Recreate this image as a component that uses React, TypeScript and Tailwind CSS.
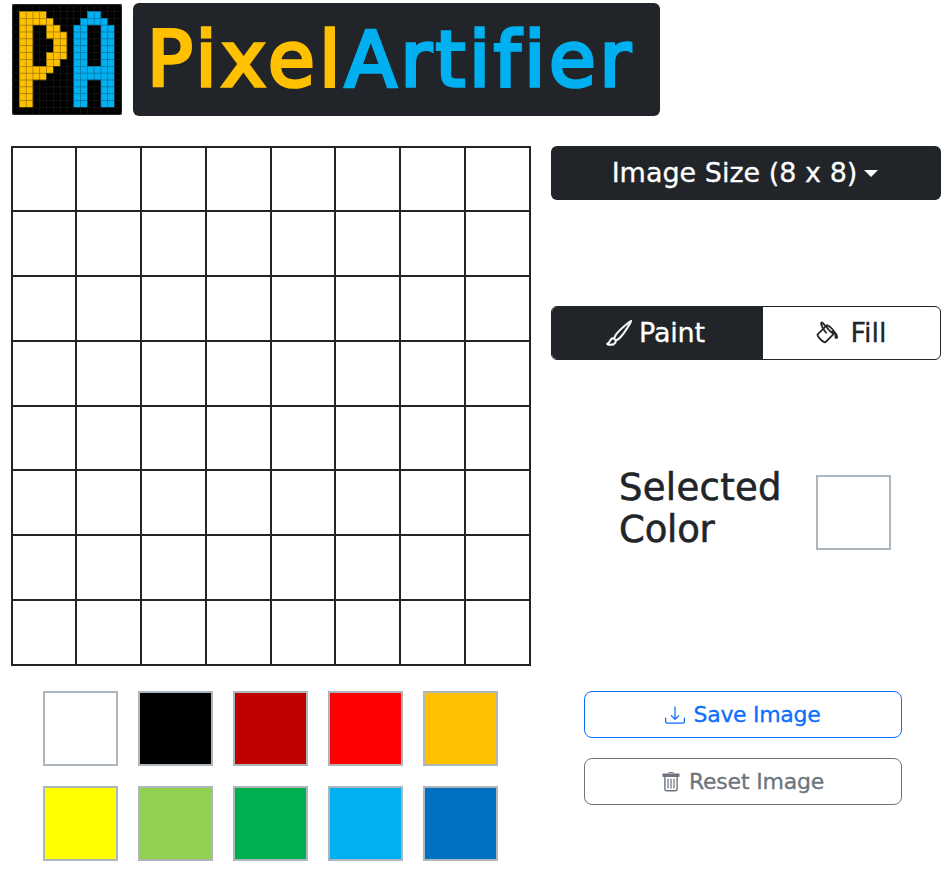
import React from "react";
import { BsBrush, BsPaintBucket, BsDownload } from "react-icons/bs";

const LOGO = [
  "................",
  ".PPPP......AA...",
  ".PPPPP....AAAA..",
  ".PP..PP..AA..AA.",
  ".PP..PPP.AA..AA.",
  ".PP...PP.AA..AA.",
  ".PP...PP.AA..AA.",
  ".PP..PPP.AA..AA.",
  ".PP..PP..AA..AA.",
  ".PPPPP...AAAAAA.",
  ".PPPP....AAAAAA.",
  ".PP......AA..AA.",
  ".PP......AA..AA.",
  ".PP......AA..AA.",
  ".PP......AA..AA.",
  "................",
];

const PALETTE = [
  "bg-white",
  "bg-black",
  "bg-[#c00000]",
  "bg-[#ff0000]",
  "bg-[#ffc000]",
  "bg-[#ffff00]",
  "bg-[#92d050]",
  "bg-[#00b050]",
  "bg-[#00b0f0]",
  "bg-[#0070c0]",
];

function Logo() {
  const s = 6.8;
  return (
    <svg width="110" height="111" viewBox="0 0 110 111" className="mt-px shrink-0">
      <rect x="0.5" y="0.5" width="109" height="110" rx="2" fill="#000" stroke="#4a4646" />
      {LOGO.map((row, y) =>
        row.split("").map((c, x) => (
          <rect
            key={`${x}-${y}`}
            x={0.6 + x * s}
            y={0.6 + y * 6.86}
            width={s}
            height={6.86}
            fill={c === "P" ? "#ffc000" : c === "A" ? "#00b0f0" : "none"}
            stroke={c === "P" ? "#a8800a" : c === "A" ? "#0a7cae" : "#141414"}
            strokeWidth="0.6"
          />
        )),
      )}
    </svg>
  );
}

function TrashIcon() {
  return (
    <svg width="18" height="20" viewBox="0 0 18 20" fill="none" stroke="currentColor">
      <path d="M6.5 1.6V1.2a.7.7 0 0 1 .7-.7h3.6a.7.7 0 0 1 .7.7v.4" />
      <rect x="0.5" y="1.4" width="17" height="3.6" rx="0.8" fill="currentColor" stroke="none" />
      <path d="M2.9 4.5v12.2a2 2 0 0 0 2 2h8.2a2 2 0 0 0 2-2V4.5" strokeWidth="1.4" />
      <path d="M6 7v9M9 7v9M12 7v9" strokeWidth="1.2" strokeLinecap="round" />
    </svg>
  );
}

function Canvas() {
  return (
    <div className="grid h-[520px] w-[520px] grid-cols-[64px_65px_65px_65px_64px_65px_65px_65px] grid-rows-[64px_65px_65px_65px_64px_65px_65px_65px] border-r-2 border-b-2 border-[#212529]">
      {Array.from({ length: 64 }, (_, i) => (
        <div key={i} className="border-t-2 border-l-2 border-[#212529] bg-white" />
      ))}
    </div>
  );
}

export default function App() {
  return (
    <div className="h-[871px] w-[944px] overflow-hidden bg-white pt-[3px] pl-[11px] font-['DejaVu_Sans',sans-serif] text-[#212529]">
      <header className="flex h-[113px] gap-[11px] pl-px">
        <Logo />
        <h1 className="flex h-[113px] w-[527px] items-center rounded-md bg-[#212529] pt-px pl-[14px] text-[76px] leading-[112px] whitespace-nowrap [-webkit-text-stroke:3.5px_currentColor]">
          <span className="tracking-[4.4px] text-[#ffc000]">Pixel</span>
          <span className="tracking-[3.7px] text-[#00b0f0]">Artifier</span>
        </h1>
      </header>

      <main className="mt-[30px] flex gap-5">
        <section className="w-[520px]">
          <Canvas />
          <div className="mt-[25px] ml-8 grid w-[455px] grid-cols-5 gap-5">
            {PALETTE.map((color) => (
              <button key={color} className={`h-[75px] w-[75px] border-2 border-[#adb5bd] ${color}`} />
            ))}
          </div>
        </section>

        <section className="w-[390px] text-[27px] [-webkit-text-stroke:0.3px_currentColor]">
          <button className="flex h-[54px] w-full items-center justify-center rounded-md bg-[#212529] pr-0.5 text-white">
            <span>Image Size (8 x 8)</span>
            <span className="ml-[7px] border-x-[7px] border-t-[7px] border-x-transparent border-t-white" />
          </button>

          <div className="mt-[106px] flex h-[54px] overflow-hidden rounded-md border border-[#212529] bg-white">
            <button className="flex w-[211px] items-center justify-center gap-[7px] bg-[#212529] pr-1 text-white">
              <BsBrush size={26} strokeWidth={0.3} />
              <span className="tracking-[-0.2px]">Paint</span>
            </button>
            <button className="flex flex-1 items-center justify-center gap-[9px]">
              <BsPaintBucket size={25} strokeWidth={0.2} />
              <span>Fill</span>
            </button>
          </div>

          <div className="mt-[104px] ml-[68px] flex items-center">
            <div className="w-[197px] pt-[3px] text-[37px] leading-[42px] [-webkit-text-stroke:0.6px_currentColor]">
              <span className="tracking-[0.3px]">Selected</span>
              <br />
              <span className="tracking-[-0.2px]">Color</span>
            </div>
            <div className="mt-[9px] h-[75px] w-[75px] border-2 border-[#adb5bd] bg-white" />
          </div>

          <div className="mt-[140px] ml-[33px] flex w-[318px] flex-col gap-5 text-[22px] tracking-[-0.3px]">
            <button className="flex h-[47px] items-center justify-center gap-[9px] rounded-lg border border-[#0d6efd] pr-px text-[#0d6efd]">
              <BsDownload size={20} />
              Save Image
            </button>
            <button className="flex h-[47px] items-center justify-center gap-[9px] rounded-lg border border-[#6c757d] text-[#6c757d]">
              <TrashIcon />
              <span className="tracking-[-0.2px]">Reset Image</span>
            </button>
          </div>
        </section>
      </main>
    </div>
  );
}
